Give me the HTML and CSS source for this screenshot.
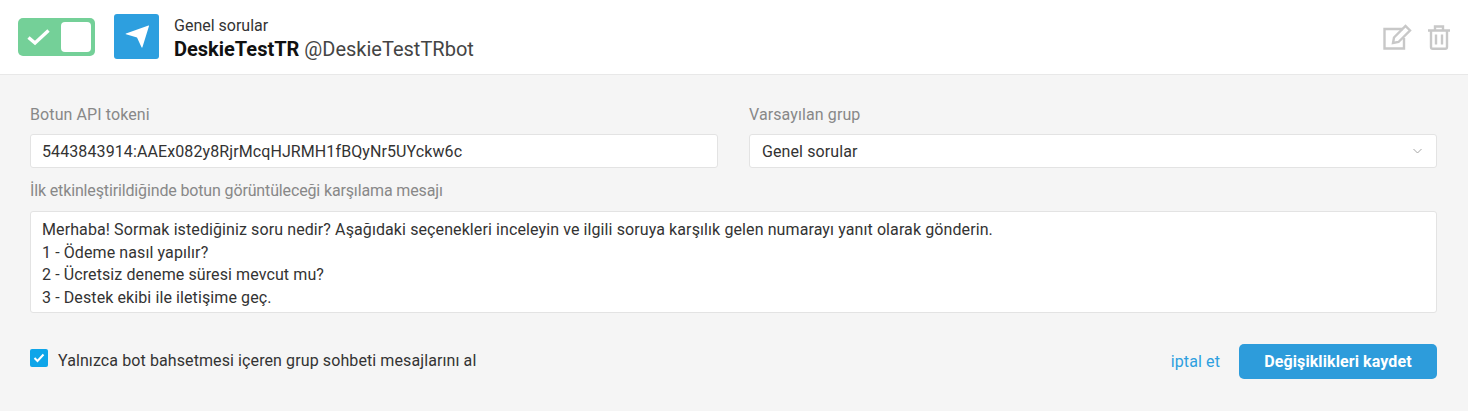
FILE: index.html
```html
<!DOCTYPE html>
<html lang="tr">
<head>
  <meta charset="UTF-8" />
  <title>Telegram bot</title>
  <link rel="stylesheet" href="styles.css">
</head>
<body>
  <header class="head">
    <div class="toggle">
      <svg class="toggle-check" width="24" height="18" viewBox="0 0 24 18"><path d="M1.500 9.500l6.500 5.500L21.500 2.500" fill="none" stroke="#fff" stroke-width="3.400"/></svg>
      <span class="toggle-knob"></span>
    </div>
    <div class="logo">
      <svg width="26" height="26" viewBox="0 0 26 26"><path d="M24.500 1.500Q25.200 1.300 25 2L18.500 23q-.4 1.200-1 .2L13 13.500 2 10.200q-1-.4 0-.8z" fill="#fff"/></svg>
    </div>
    <div class="title">
      <div class="group">Genel sorular</div>
      <div class="name"><b>DeskieTestTR</b> @DeskieTestTRbot</div>
    </div>
    <div class="actions">
      <svg width="29" height="26" viewBox="0 0 29 26" fill="none" stroke="#c8c8c8" stroke-width="2.400">
        <path d="M20 5H1.500v19.500H21V14"/>
        <path d="M11 13.500L22.500 2l4.500 4.500L15.500 18l-5.500 1z"/>
      </svg>
      <svg width="22" height="25" viewBox="0 0 22 25" fill="none" stroke="#c8c8c8" stroke-width="2.400">
        <path d="M0 5.500h22M7 5.500V1.500h8v4M3 5.500v16.500q0 1.800 1.800 1.800h12.400q1.800 0 1.800-1.800V5.500M8 9.500v10M14 9.500v10"/>
      </svg>
    </div>
  </header>

  <main class="form">
    <div class="columns">
      <div class="field">
        <label class="label">Botun API tokeni</label>
        <input class="input" type="text" value="5443843914:AAEx082y8RjrMcqHJRMH1fBQyNr5UYckw6c">
      </div>
      <div class="field">
        <label class="label">Varsayılan grup</label>
        <div class="input select">
          <span>Genel sorular</span>
          <svg width="9" height="6" viewBox="0 0 9 6"><path d="M.5 1l4 4 4-4" fill="none" stroke="#a5a5a5"/></svg>
        </div>
      </div>
    </div>
    <label class="label label-message">İlk etkinleştirildiğinde botun görüntüleceği karşılama mesajı</label>
    <div class="message">Merhaba! Sormak istediğiniz soru nedir? Aşağıdaki seçenekleri inceleyin ve ilgili soruya karşılık gelen numarayı yanıt olarak gönderin.<br>1 - Ödeme nasıl yapılır?<br>2 - Ücretsiz deneme süresi mevcut mu?<br>3 - Destek ekibi ile iletişime geç.</div>
    <div class="foot">
      <div class="check-row">
        <span class="checkbox">
          <svg width="12" height="10" viewBox="0 0 12 10"><path d="M1.500 5l3 3 6-6.500" fill="none" stroke="#fff" stroke-width="2"/></svg>
        </span>
        <span class="check-text">Yalnızca bot bahsetmesi içeren grup sohbeti mesajlarını al</span>
      </div>
      <div class="buttons">
        <a class="cancel">iptal et</a>
        <button class="save">Değişiklikleri kaydet</button>
      </div>
    </div>
  </main>
</body>
</html>
```

FILE: styles.css
```css
* {
  box-sizing: border-box;
}

body {
  margin: 0;
  height: 411px;
  overflow: hidden;
  font-family: Roboto, sans-serif;
  font-size: 16px;
  color: #333;
  background: #f5f5f5;
}

.head {
  display: flex;
  align-items: center;
  height: 75px;
  padding: 0 18px 1px;
  background: #fff;
  border-bottom: 1px solid #e8e8e8;
}

.toggle {
  display: flex;
  align-items: center;
  justify-content: space-between;
  width: 77px;
  height: 38px;
  padding: 3px 4px 3px 9px;
  border-radius: 5px;
  background: #74d098;
}

.toggle-knob {
  width: 30px;
  height: 30px;
  border-radius: 4px;
  background: #fff;
}

.logo {
  display: flex;
  align-items: center;
  justify-content: center;
  width: 45px;
  height: 45px;
  margin-left: 19px;
  border-radius: 3px;
  background: #2d9fdf;
}

.title {
  margin-left: 15px;
  padding-top: 4px;
  color: #333;
}

.group {
  font-size: 16px;
  line-height: 20px;
}

.name {
  margin-top: 1px;
  font-size: 20px;
  line-height: 25px;
  color: #444;
}

.name b {
  font-weight: 700;
  color: #111;
}

.actions {
  display: flex;
  align-items: center;
  gap: 16px;
  margin-left: auto;
  padding-top: 1px;
}

.form {
  padding: 30px 31px 0 30px;
}

.columns {
  display: grid;
  grid-template-columns: 1fr 1fr;
  gap: 31px;
}

.label {
  display: block;
  font-size: 16px;
  line-height: 20px;
  letter-spacing: 0.1px;
  color: #888;
}

.input {
  display: block;
  width: 100%;
  height: 34px;
  margin-top: 9px;
  padding: 0 11px;
  font-family: inherit;
  font-size: 16px;
  letter-spacing: 0.1px;
  color: #333;
  background: #fff;
  border: 1px solid #e3e3e3;
  border-radius: 3px;
}

.select {
  display: flex;
  align-items: center;
  justify-content: space-between;
  padding: 0 14px 0 12px;
}

.label-message {
  margin-top: 13px;
  letter-spacing: -0.14px;
}

.message {
  height: 102px;
  margin-top: 10px;
  padding: 7px 11px;
  font-size: 16px;
  line-height: 22.500px;
  letter-spacing: 0.1px;
  color: #333;
  background: #fff;
  border: 1px solid #e3e3e3;
  border-radius: 3px;
}

.foot {
  display: flex;
  justify-content: space-between;
  align-items: center;
  margin-top: 31px;
}

.check-row {
  display: flex;
  align-items: center;
  gap: 10px;
  padding-bottom: 1px;
  line-height: 20px;
  color: #333;
}

.check-text {
  letter-spacing: 0.1px;
}

.checkbox {
  display: flex;
  align-items: center;
  justify-content: center;
  width: 18px;
  height: 18px;
  margin-top: -7px;
  border-radius: 2px;
  background: #0ea5e9;
}

.buttons {
  display: flex;
  align-items: center;
  gap: 19px;
}

.cancel {
  letter-spacing: 0.1px;
  color: #2d9fdf;
}

.save {
  width: 198px;
  height: 35px;
  font-family: inherit;
  font-size: 16px;
  font-weight: 700;
  letter-spacing: 0.1px;
  color: #fff;
  background: #2d9cdb;
  border: none;
  border-radius: 5px;
}
```
